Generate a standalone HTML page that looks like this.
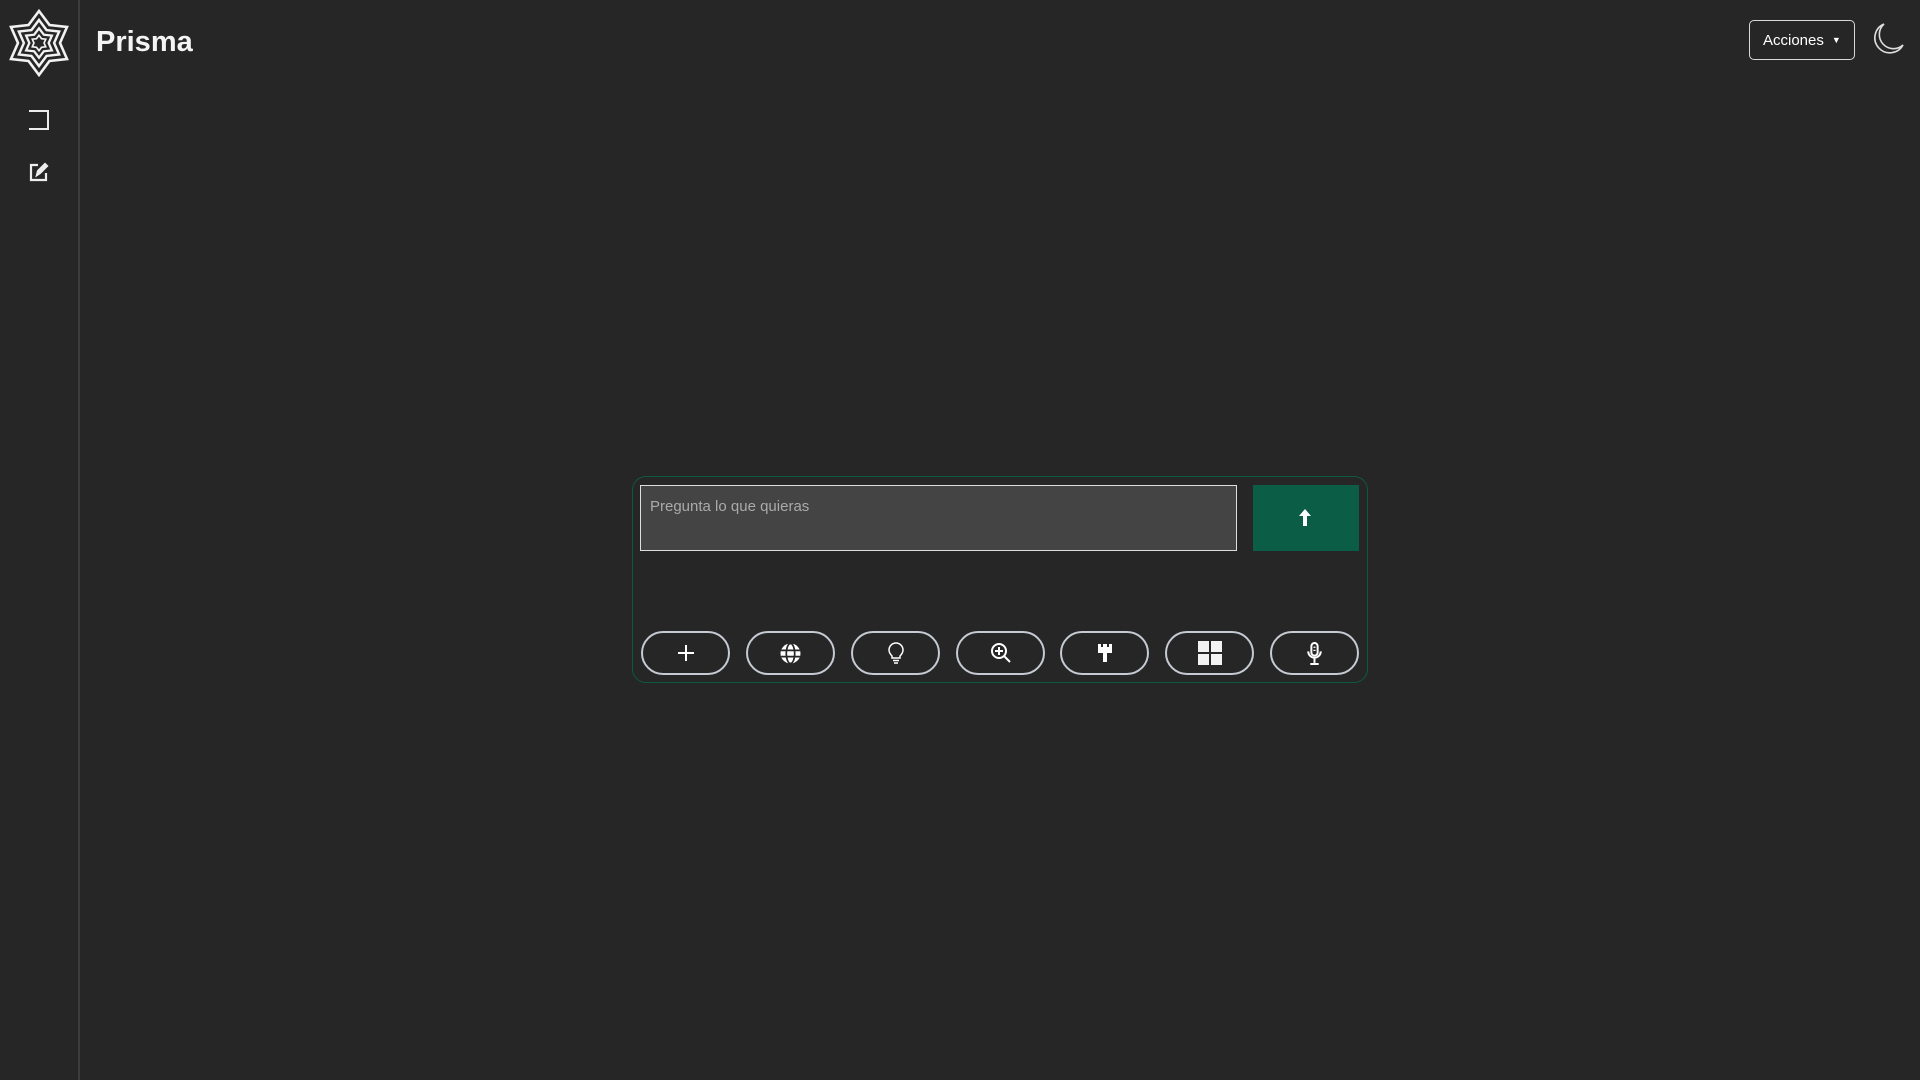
<!DOCTYPE html>
<html><head><meta charset="utf-8"><style>
*{box-sizing:border-box;margin:0;padding:0}
html,body{width:1920px;height:1080px;background:#262626;overflow:hidden;font-family:"Liberation Sans",sans-serif;color:#fff}
.side{position:absolute;left:0;top:0;width:80px;height:1080px;border-right:2px solid #3c3c3c}
.logo{position:absolute;left:7px;top:9px}
.title{position:absolute;left:96px;top:26px;font-size:29px;font-weight:bold;color:#f4f4f4}
.act{position:absolute;left:1749px;top:20px;width:106px;height:40px;border:1px solid #d8d8d8;border-radius:5px;font-size:15px;line-height:38px;padding-left:13px;color:#fff}
.act span{font-size:9px;margin-left:8px;vertical-align:2px}
.comp{position:absolute;left:632px;top:476px;width:736px;height:207px;border:1px solid #0c5a42;border-radius:14px}
.ta{position:absolute;left:640px;top:485px;width:597px;height:66px;background:#444;border:1px solid #ddd;font-size:15px;color:#aaa;padding:12px 9px}
.send{position:absolute;left:1253px;top:485px;width:106px;height:66px;background:#0b5e45}
.btn{position:absolute;top:631px;width:89px;height:44px;border:2px solid #c5cad3;border-radius:22px;display:flex;align-items:center;justify-content:center}
</style></head><body>
<div class="side">
<svg class="logo" width="64" height="68" viewBox="-32 -34 64 68" fill="none" stroke="#f2f2f2" stroke-width="2.6" stroke-linejoin="miter">
<g id="st"><polygon points="0,-32 10.5,-18 28,-16 21,0 28,16 10.5,18 0,32 -10.5,18 -28,16 -21,0 -28,-16 -10.5,-18"/></g>
<polygon points="0,-32 10.5,-18 28,-16 21,0 28,16 10.5,18 0,32 -10.5,18 -28,16 -21,0 -28,-16 -10.5,-18" transform="scale(0.72)" stroke-width="3.4"/>
<polygon points="0,-32 10.5,-18 28,-16 21,0 28,16 10.5,18 0,32 -10.5,18 -28,16 -21,0 -28,-16 -10.5,-18" transform="scale(0.46)" stroke-width="5"/>
<polygon points="0,-32 10.5,-18 28,-16 21,0 28,16 10.5,18 0,32 -10.5,18 -28,16 -21,0 -28,-16 -10.5,-18" transform="scale(0.24)" stroke-width="7"/>
</svg>
<svg style="position:absolute;left:28px;top:109px" width="22" height="22" viewBox="0 0 22 22" fill="none" stroke="#eee" stroke-width="2"><path d="M1 2H20V20H1"/></svg>
<svg style="position:absolute;left:29px;top:162px" width="20" height="20" viewBox="0 0 20 20" fill="none" stroke="#eee" stroke-width="2.2"><path d="M9 3H2V18H17V11"/><path d="M8 13L9 9L16 2L18 4L11 11Z" fill="#eee"/></svg>
</div>
<div class="title">Prisma</div>
<div class="act">Acciones<span>▼</span></div>
<svg style="position:absolute;left:1870px;top:21px" width="36" height="36" viewBox="0 0 36 36" fill="none" stroke="#ddd" stroke-width="1.6"><path d="M14 3A15 15 0 1 0 33 24A13 13 0 0 1 14 3Z"/></svg>
<div class="comp"></div>
<div class="ta">Pregunta lo que quieras</div>
<div class="send"><svg style="position:absolute;left:45px;top:24px" width="14" height="17" viewBox="0 0 14 17" fill="#fff"><path d="M7 0L13 7H9V17H5V7H1Z"/></svg></div>
<div class="btn" style="left:641px"><svg width="20" height="20" viewBox="0 0 20 20" stroke="#fff" stroke-width="2"><path d="M10 2V18M2 10H18"/></svg></div>
<div class="btn" style="left:746px"><svg width="21" height="21" viewBox="0 0 20 20"><circle cx="10" cy="10" r="9.5" fill="#fff"/><g stroke="#262626" stroke-width="1.6" fill="none"><ellipse cx="10" cy="10" rx="4" ry="9.5"/><path d="M1 7H19M1 13H19"/></g></svg></div>
<div class="btn" style="left:851px"><svg width="18" height="22" viewBox="0 0 18 22" fill="none" stroke="#fff" stroke-width="1.5"><path d="M5 14C3 12 2 10 2 8A7 7 0 0 1 16 8C16 10 15 12 13 14V16H5Z"/><path d="M6 18.5H12M7 21H11"/></svg></div>
<div class="btn" style="left:956px"><svg width="22" height="22" viewBox="0 0 22 22" fill="none" stroke="#fff" stroke-width="2"><circle cx="9" cy="9" r="7"/><path d="M14 14L20 20M9 5V13M5 9H13"/></svg></div>
<div class="btn" style="left:1060px"><svg width="18" height="20" viewBox="0 0 16 20" fill="#fff"><path d="M1 1H4V4H6V1H10V4H12V1H15V10H1Z"/><rect x="6" y="10" width="4" height="9"/></svg></div>
<div class="btn" style="left:1165px"><svg width="24" height="24" viewBox="0 0 24 24" fill="#f2f2f2"><rect x="0" y="0" width="11" height="11"/><rect x="13" y="0" width="11" height="11"/><rect x="0" y="13" width="11" height="11"/><rect x="13" y="13" width="11" height="11"/></svg></div>
<div class="btn" style="left:1270px"><svg width="17" height="23" viewBox="0 0 16 22" fill="none" stroke="#fff" stroke-width="1.9"><rect x="5" y="1" width="6" height="12" rx="3"/><path d="M2 9A6 6 0 0 0 14 9M8 15V20M4 21H12"/><path d="M7 5H9M7 8H9" stroke-width="1.2"/></svg></div>
</body></html>
